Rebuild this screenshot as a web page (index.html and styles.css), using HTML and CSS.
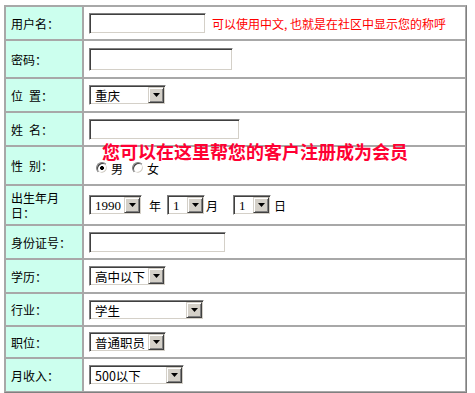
FILE: index.html
```html
<!DOCTYPE html>
<html lang="zh-CN">
<head>
    <meta charset="UTF-8">
    <title>会员注册</title>
    <link rel="stylesheet" href="styles.css">
</head>
<body>
    <form id="regForm">
    <table class="reg">
        <tr>
            <td class="lbl">用户名：</td>
            <td class="val"><input type="text" class="txt w-user" name="username"><span class="hint">可以使用中文, 也就是在社区中显示您的称呼</span></td>
        </tr>
        <tr class="pwd">
            <td class="lbl">密码：</td>
            <td class="val"><input type="password" class="txt w-pwd" name="password"></td>
        </tr>
        <tr>
            <td class="lbl">位&ensp;置：</td>
            <td class="val">
                <span class="dd w-77">
                    <select name="city"><option>重庆</option><option>北京</option><option>上海</option></select>
                    <span class="dd-btn"><svg width="7" height="4" viewBox="0 0 7 4"><path d="M0 0H7L3.5 4Z" fill="#000"/></svg></span>
                </span>
            </td>
        </tr>
        <tr>
            <td class="lbl">姓&ensp;名：</td>
            <td class="val"><input type="text" class="txt w-name" name="realname"></td>
        </tr>
        <tr class="sex">
            <td class="lbl">性&ensp;别：</td>
            <td class="val">
                <div class="notice">您可以在这里帮您的客户注册成为会员</div>
                <div class="opts">
                    <input type="radio" name="sex" id="male" checked><label for="male">男</label>
                    <input type="radio" name="sex" id="female" class="second"><label for="female">女</label>
                </div>
            </td>
        </tr>
        <tr class="birth">
            <td class="lbl">出生年月日：</td>
            <td class="val">
                <div class="date">
                    <span class="dd w-53 serif">
                        <select name="year"><option>1990</option><option>1991</option></select>
                        <span class="dd-btn"><svg width="7" height="4" viewBox="0 0 7 4"><path d="M0 0H7L3.5 4Z" fill="#000"/></svg></span>
                    </span>
                    <span class="unit year">年</span>
                    <span class="dd w-38 serif">
                        <select name="month"><option>1</option><option>2</option></select>
                        <span class="dd-btn"><svg width="7" height="4" viewBox="0 0 7 4"><path d="M0 0H7L3.5 4Z" fill="#000"/></svg></span>
                    </span>
                    <span class="unit month">月</span>
                    <span class="dd w-38 serif">
                        <select name="day"><option>1</option><option>2</option></select>
                        <span class="dd-btn"><svg width="7" height="4" viewBox="0 0 7 4"><path d="M0 0H7L3.5 4Z" fill="#000"/></svg></span>
                    </span>
                    <span class="unit day">日</span>
                </div>
            </td>
        </tr>
        <tr>
            <td class="lbl">身份证号：</td>
            <td class="val"><input type="text" class="txt w-id" name="idcard"></td>
        </tr>
        <tr>
            <td class="lbl">学历：</td>
            <td class="val">
                <span class="dd w-77">
                    <select name="edu"><option>高中以下</option><option>大专</option><option>本科</option></select>
                    <span class="dd-btn"><svg width="7" height="4" viewBox="0 0 7 4"><path d="M0 0H7L3.5 4Z" fill="#000"/></svg></span>
                </span>
            </td>
        </tr>
        <tr class="job">
            <td class="lbl">行业：</td>
            <td class="val">
                <span class="dd w-115">
                    <select name="trade"><option>学生</option><option>IT</option></select>
                    <span class="dd-btn"><svg width="7" height="4" viewBox="0 0 7 4"><path d="M0 0H7L3.5 4Z" fill="#000"/></svg></span>
                </span>
            </td>
        </tr>
        <tr class="post">
            <td class="lbl">职位：</td>
            <td class="val">
                <span class="dd w-77">
                    <select name="post"><option>普通职员</option><option>经理</option></select>
                    <span class="dd-btn"><svg width="7" height="4" viewBox="0 0 7 4"><path d="M0 0H7L3.5 4Z" fill="#000"/></svg></span>
                </span>
            </td>
        </tr>
        <tr>
            <td class="lbl">月收入：</td>
            <td class="val">
                <span class="dd w-95">
                    <select name="income"><option>500以下</option><option>500-1000</option></select>
                    <span class="dd-btn"><svg width="7" height="4" viewBox="0 0 7 4"><path d="M0 0H7L3.5 4Z" fill="#000"/></svg></span>
                </span>
            </td>
        </tr>
    </table>
    </form>
</body>
</html>
```

FILE: styles.css
```css
body {
    margin: 0;
    padding: 5px 4px;
    background: #fff;
    font-family: "Noto Sans CJK SC", sans-serif;
    font-size: 12px;
    color: #000;
}
form {
    margin: 0;
}
.reg {
    width: 463px;
    border-collapse: separate;
    border-spacing: 0;
    border: 1px solid #a8a8a8;
    border-right-color: #808080;
    border-bottom-color: #808080;
}
.reg td {
    height: 32px;
    padding: 0 5px;
    border: 1px solid #a8a8a8;
    vertical-align: middle;
    line-height: 15px;
}
.reg .pwd td { height: 36px; }
.reg .sex td { height: 37px; }
.reg .birth td { height: 38px; }
.reg .job td { height: 31px; }
.reg .post td { height: 30px; }
.lbl {
    width: 66px;
    background: #ccffee;
}
.val {
    position: relative;
    background: #fff;
}
.txt {
    box-sizing: border-box;
    height: 21px;
    margin: 0;
    padding: 1px 3px;
    vertical-align: middle;
    border: 1px solid;
    border-color: #808080 #fff #fff #808080;
    box-shadow: inset 1px 1px #404040, inset -1px -1px #d4d0c8;
    background: #fff;
    font: inherit;
}
.w-user { width: 117px; }
.w-pwd { width: 144px; height: 23px; }
.w-name { width: 151px; }
.w-id { width: 137px; }
.hint {
    margin-left: 6px;
    color: #ff0000;
    vertical-align: middle;
}
.dd {
    position: relative;
    display: inline-block;
    height: 20px;
    vertical-align: middle;
}
.dd select {
    appearance: none;
    -webkit-appearance: none;
    box-sizing: border-box;
    width: 100%;
    height: 20px;
    margin: 0;
    padding: 0 18px 0 4px;
    text-indent: 1px;
    border: 1px solid;
    border-color: #808080 #fff #fff #808080;
    box-shadow: inset 1px 1px #404040, inset -1px -1px #d4d0c8;
    border-radius: 0;
    background: #fff;
    font-family: "Noto Sans CJK SC", sans-serif;
    font-size: 12.5px;
    color: #000;
    outline: none;
}
.dd.serif select {
    font-family: "Liberation Serif", "Noto Sans CJK SC", serif;
    font-size: 13px;
}
.dd-btn {
    position: absolute;
    top: 2px;
    right: 2px;
    box-sizing: border-box;
    width: 16px;
    height: 16px;
    display: flex;
    align-items: center;
    justify-content: center;
    background: #d4d0c8;
    border: 1px solid;
    border-color: #d4d0c8 #404040 #404040 #d4d0c8;
    box-shadow: inset 1px 1px #fff, inset -1px -1px #808080;
    pointer-events: none;
}
.dd-btn svg {
    display: block;
}
.w-38 { width: 38px; }
.w-53 { width: 53px; }
.w-77 { width: 77px; }
.w-95 { width: 95px; }
.w-115 { width: 115px; }
.notice {
    position: absolute;
    left: 18px;
    top: -5px;
    white-space: nowrap;
    font-size: 18px;
    line-height: 18px;
    font-weight: bold;
    color: #ff0033;
}
.opts {
    display: flex;
    align-items: center;
    padding-top: 5px;
}
.opts input[type="radio"] {
    appearance: none;
    -webkit-appearance: none;
    box-sizing: border-box;
    width: 12px;
    height: 12px;
    margin: 0 3px 0 7px;
    border: 1px solid;
    border-color: #808080 #fff #fff #808080;
    border-radius: 50%;
    box-shadow: inset 1px 1px #404040, inset -1px -1px #d4d0c8;
    background: #fff;
}
.opts input.second {
    margin-left: 9px;
}
.opts input[type="radio"]:checked {
    background: radial-gradient(circle, #000 0, #000 1.8px, #fff 2.2px);
}
.date {
    display: flex;
    align-items: center;
}
.unit {
    font-size: 12px;
}
.unit.year { margin: 0 6px 0 7px; }
.unit.month { margin: 0 15px 0 1px; }
.unit.day { margin-left: 3px; }
```
